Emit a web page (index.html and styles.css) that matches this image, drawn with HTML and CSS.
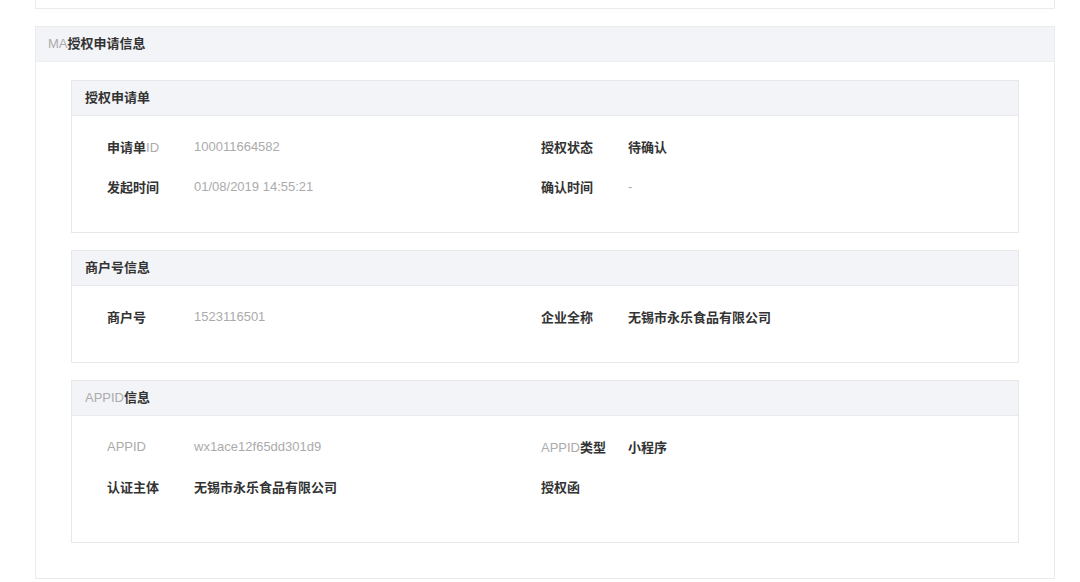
FILE: index.html
```html
<!DOCTYPE html>
<html lang="zh-CN">
<head>
    <meta charset="UTF-8">
    <title>MA授权申请信息</title>
    <link rel="stylesheet" href="styles.css">
</head>
<body>
    <div class="page">
        <div class="top-card"></div>

        <div class="panel">
            <div class="panel-head"><span class="lat">MA</span>授权申请信息</div>
            <div class="panel-body">

                <div class="box">
                    <div class="box-head">授权申请单</div>
                    <div class="box-body">
                        <div class="row">
                            <div class="cell"><span class="label">申请单<span class="lat">ID</span></span><span class="val lat">100011664582</span></div>
                            <div class="cell"><span class="label">授权状态</span><span class="val">待确认</span></div>
                        </div>
                        <div class="row">
                            <div class="cell"><span class="label">发起时间</span><span class="val lat">01/08/2019 14:55:21</span></div>
                            <div class="cell"><span class="label">确认时间</span><span class="val lat">-</span></div>
                        </div>
                    </div>
                </div>

                <div class="box">
                    <div class="box-head">商户号信息</div>
                    <div class="box-body">
                        <div class="row">
                            <div class="cell"><span class="label">商户号</span><span class="val lat">1523116501</span></div>
                            <div class="cell"><span class="label">企业全称</span><span class="val">无锡市永乐食品有限公司</span></div>
                        </div>
                    </div>
                </div>

                <div class="box">
                    <div class="box-head"><span class="lat">APPID</span>信息</div>
                    <div class="box-body tall">
                        <div class="row">
                            <div class="cell"><span class="label lat">APPID</span><span class="val lat">wx1ace12f65dd301d9</span></div>
                            <div class="cell"><span class="label"><span class="lat">APPID</span>类型</span><span class="val">小程序</span></div>
                        </div>
                        <div class="row">
                            <div class="cell"><span class="label">认证主体</span><span class="val">无锡市永乐食品有限公司</span></div>
                            <div class="cell"><span class="label">授权函</span><span class="val"></span></div>
                        </div>
                    </div>
                </div>

            </div>
        </div>
    </div>
</body>
</html>
```

FILE: styles.css
```css
body {
    margin: 0;
    background-color: #fff;
    font-family: "Liberation Sans", "Noto Sans CJK SC", sans-serif;
    font-size: 13px;
    color: #333;
}
.page {
    padding: 0 25px 0 35px;
}
.top-card {
    height: 8px;
    border: 1px solid #ebebeb;
    border-top: none;
    margin-bottom: 17px;
}
.panel {
    border: 1px solid #ebebeb;
    margin-bottom: 4px;
}
.panel-head {
    height: 34px;
    line-height: 34px;
    padding-left: 12px;
    background-color: #f3f4f7;
    border-bottom: 1px solid #eceef2;
    font-weight: bold;
}
.panel-body {
    padding: 18px 35px 35px;
}
.box {
    border: 1px solid #e8e8e8;
    margin-bottom: 17px;
}
.box:last-child {
    margin-bottom: 0;
}
.box-head {
    height: 34px;
    line-height: 34px;
    padding-left: 13px;
    background-color: #f3f4f7;
    border-bottom: 1px solid #e8eaee;
    font-weight: bold;
}
.box-body {
    padding: 10px 35px 26px;
}
.box-body.tall {
    padding-bottom: 36px;
}
.row {
    display: grid;
    grid-template-columns: 434px 1fr;
    height: 40px;
    align-items: center;
}
.cell {
    display: flex;
    align-items: center;
}
.label {
    width: 87px;
    font-weight: bold;
    flex-shrink: 0;
}
.val {
    font-weight: bold;
}
.lat {
    font-weight: normal;
    color: #ababab;
}
```
